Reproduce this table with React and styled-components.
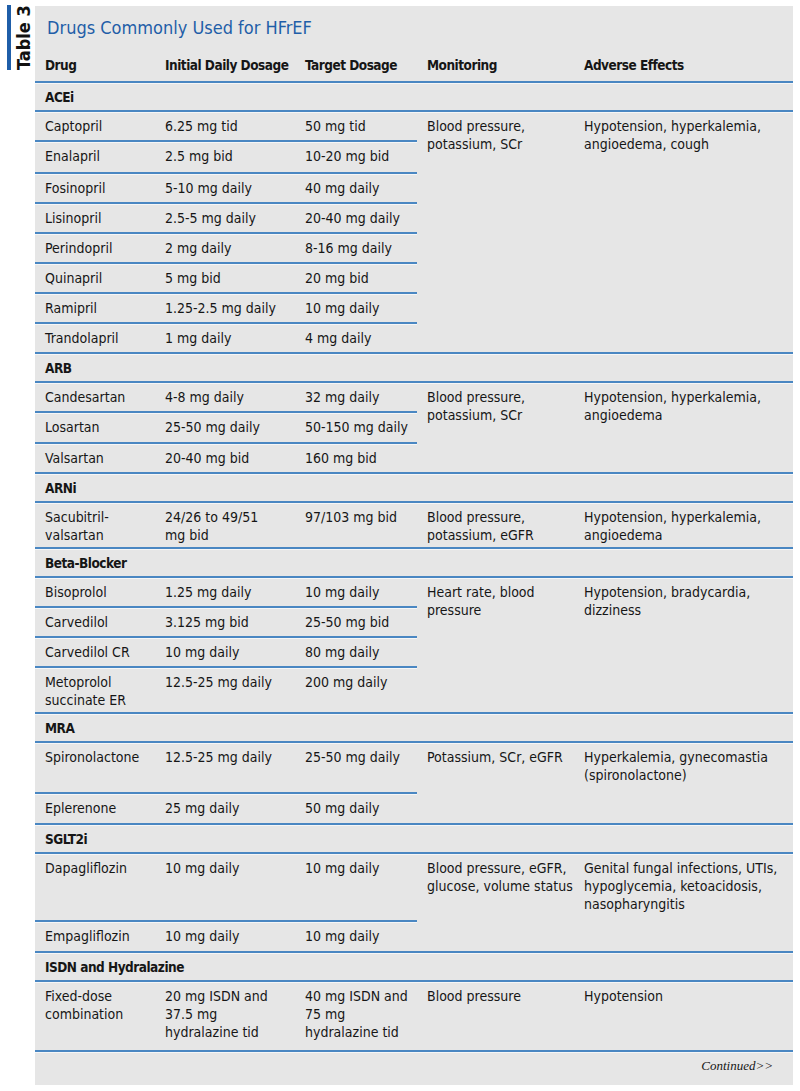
import styled, { createGlobalStyle } from 'styled-components';

const GlobalStyle = createGlobalStyle`
  *, *::before, *::after {
    box-sizing: border-box;
  }
  body {
    margin: 0;
    background: #fff;
    font-family: "Liberation Sans Narrow", "DejaVu Sans Condensed", "Liberation Sans", sans-serif;
    color: #161616;
  }
`;

const blue = '#4a87c2';

const Page = styled.div`
  display: flex;
  align-items: flex-start;
  padding: 5px 7px 0 7px;
`;

const Tab = styled.div`
  display: flex;
  width: 28px;
  height: 65px;
`;

const TabBar = styled.span`
  width: 4px;
  height: 100%;
  background: #1f5ea8;
`;

const TabLabel = styled.span`
  writing-mode: vertical-rl;
  transform: rotate(180deg);
  height: 65px;
  white-space: nowrap;
  font-size: 18px;
  font-weight: bold;
  line-height: 20px;
  color: #111;
  margin-left: 3px;
`;

const Panel = styled.section`
  width: 758px;
  margin-top: 1px;
  background: #e6e6e6;
`;

const Title = styled.h1`
  margin: 0;
  padding: 9px 12px 0 12px;
  font-size: 18px;
  line-height: 26px;
  font-weight: normal;
  color: #1f5ea8;
`;

const Rule = styled.div`
  border-bottom: 2px solid ${blue};
  box-shadow: 0 1px 0 #f6f6f6;
`;

const HeadRow = styled(Rule)`
  display: grid;
  grid-template-columns: 120px 140px 122px 157px 1fr;
  min-height: 32px;
  margin-top: 10px;
`;

const Cell = styled.div`
  padding: 5px 10px 3px;
  font-size: 14px;
  line-height: 18px;
  white-space: pre;
`;

const HeadCell = styled(Cell)`
  font-size: 13.5px;
  font-weight: bold;
  letter-spacing: -0.5px;
`;

const GroupHead = styled(Rule)`
  padding: 5px 10px 4px;
  font-size: 13.5px;
  line-height: 18px;
  font-weight: bold;
  letter-spacing: -0.5px;
`;

const Body = styled(Rule)`
  display: grid;
  grid-template-columns: 382px 157px 1fr;
`;

const DrugList = styled.div`
  display: flex;
  flex-direction: column;
`;

const DrugRow = styled.div`
  display: grid;
  grid-template-columns: 120px 140px 122px;
  box-sizing: content-box;
  min-height: ${p => p.$height}px;
  border-bottom: 2px solid ${blue};
  box-shadow: 0 1px 0 #f6f6f6;

  &:last-child {
    border-bottom: none;
    box-shadow: none;
  }
`;

const Footer = styled.div`
  padding: 5px 20px 11px 0;
  text-align: right;
  font-family: "Liberation Serif", serif;
  font-style: italic;
  font-size: 13px;
  line-height: 17px;
`;

const columns = ['Drug', 'Initial Daily Dosage', 'Target Dosage', 'Monitoring', 'Adverse Effects'];

// [drug, initial dose, target dose, row height]
const groups = [
  {
    name: 'ACEi',
    monitoring: 'Blood pressure,\npotassium, SCr',
    adverse: 'Hypotension, hyperkalemia,\nangioedema, cough',
    drugs: [
      ['Captopril', '6.25 mg tid', '50 mg tid'],
      ['Enalapril', '2.5 mg bid', '10-20 mg bid', 30],
      ['Fosinopril', '5-10 mg daily', '40 mg daily'],
      ['Lisinopril', '2.5-5 mg daily', '20-40 mg daily'],
      ['Perindopril', '2 mg daily', '8-16 mg daily'],
      ['Quinapril', '5 mg bid', '20 mg bid'],
      ['Ramipril', '1.25-2.5 mg daily', '10 mg daily'],
      ['Trandolapril', '1 mg daily', '4 mg daily'],
    ],
  },
  {
    name: 'ARB',
    monitoring: 'Blood pressure,\npotassium, SCr',
    adverse: 'Hypotension, hyperkalemia,\nangioedema',
    drugs: [
      ['Candesartan', '4-8 mg daily', '32 mg daily'],
      ['Losartan', '25-50 mg daily', '50-150 mg daily', 29],
      ['Valsartan', '20-40 mg bid', '160 mg bid', 28],
    ],
  },
  {
    name: 'ARNi',
    monitoring: 'Blood pressure,\npotassium, eGFR',
    adverse: 'Hypotension, hyperkalemia,\nangioedema',
    drugs: [['Sacubitril-\nvalsartan', '24/26 to 49/51\nmg bid', '97/103 mg bid']],
  },
  {
    name: 'Beta-Blocker',
    monitoring: 'Heart rate, blood\npressure',
    adverse: 'Hypotension, bradycardia,\ndizziness',
    drugs: [
      ['Bisoprolol', '1.25 mg daily', '10 mg daily'],
      ['Carvedilol', '3.125 mg bid', '25-50 mg bid'],
      ['Carvedilol CR', '10 mg daily', '80 mg daily'],
      ['Metoprolol\nsuccinate ER', '12.5-25 mg daily', '200 mg daily'],
    ],
  },
  {
    name: 'MRA',
    monitoring: 'Potassium, SCr, eGFR',
    adverse: 'Hyperkalemia, gynecomastia\n(spironolactone)',
    drugs: [
      ['Spironolactone', '12.5-25 mg daily', '25-50 mg daily', 49],
      ['Eplerenone', '25 mg daily', '50 mg daily', 29],
    ],
  },
  {
    name: 'SGLT2i',
    monitoring: 'Blood pressure, eGFR,\nglucose, volume status',
    adverse: 'Genital fungal infections, UTIs,\nhypoglycemia, ketoacidosis,\nnasopharyngitis',
    drugs: [
      ['Dapagliflozin', '10 mg daily', '10 mg daily', 66],
      ['Empagliflozin', '10 mg daily', '10 mg daily', 29],
    ],
  },
  {
    name: 'ISDN and Hydralazine',
    monitoring: 'Blood pressure',
    adverse: 'Hypotension',
    drugs: [
      ['Fixed-dose\ncombination', '20 mg ISDN and\n37.5 mg\nhydralazine tid', '40 mg ISDN and\n75 mg\nhydralazine tid', 68],
    ],
  },
];

export default function App() {
  return (
    <>
      <GlobalStyle />
      <Page>
        <Tab>
          <TabBar />
          <TabLabel>Table 3</TabLabel>
        </Tab>
        <Panel>
          <Title>Drugs Commonly Used for HFrEF</Title>
          <HeadRow>
            {columns.map(c => (
              <HeadCell key={c}>{c}</HeadCell>
            ))}
          </HeadRow>
          {groups.map(g => (
            <div key={g.name}>
              <GroupHead>{g.name}</GroupHead>
              <Body>
                <DrugList>
                  {g.drugs.map(([drug, initial, target, height = 28]) => (
                    <DrugRow key={drug} $height={height}>
                      <Cell>{drug}</Cell>
                      <Cell>{initial}</Cell>
                      <Cell>{target}</Cell>
                    </DrugRow>
                  ))}
                </DrugList>
                <Cell>{g.monitoring}</Cell>
                <Cell>{g.adverse}</Cell>
              </Body>
            </div>
          ))}
          <Footer>Continued&gt;&gt;</Footer>
        </Panel>
      </Page>
    </>
  );
}
